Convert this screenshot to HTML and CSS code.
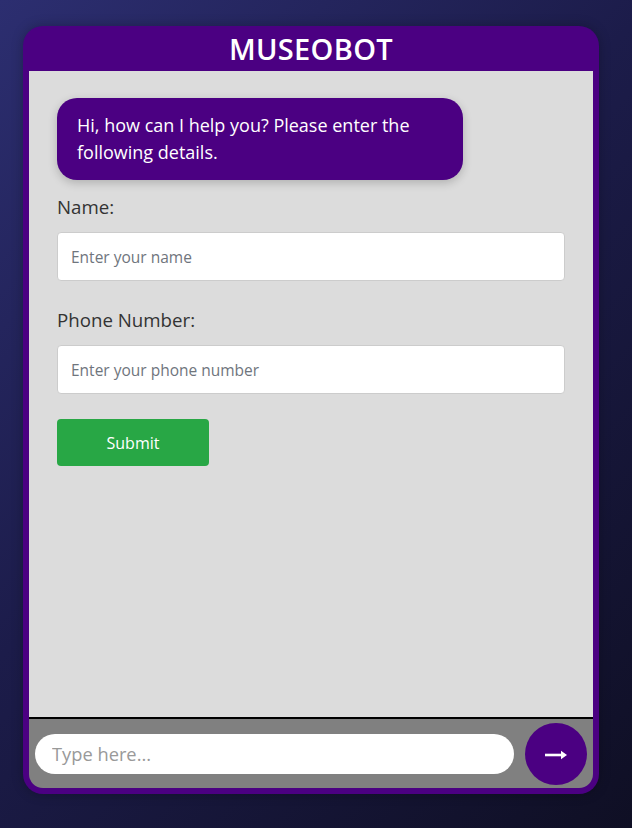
FILE: index.html
```html
<!DOCTYPE html>
<html lang="en">
<head>
<meta charset="utf-8">
<title>MuseoBot</title>
<link rel="stylesheet" href="styles.css">
</head>
<body>
<div class="bot">
  <header class="bot-header">MUSEOBOT</header>
  <main class="chat">
    <div class="bubble">Hi, how can I help you? Please enter the following details.</div>
    <form class="details">
      <label class="field-label" for="name">Name:</label>
      <input class="field" id="name" type="text" placeholder="Enter your name">
      <label class="field-label" for="phone">Phone Number:</label>
      <input class="field" id="phone" type="text" placeholder="Enter your phone number">
      <button class="submit" type="button">Submit</button>
    </form>
  </main>
  <footer class="composer">
    <input class="type-box" type="text" placeholder="Type here...">
    <button class="send" type="button" aria-label="Send">
      <svg class="send-icon" width="24" height="12" viewBox="0 0 24 12" aria-hidden="true">
        <path d="M1 6 H19" stroke="#fff" stroke-width="2.6" fill="none"/>
        <path d="M17 1.8 L23 6 L17 10.2 Z" fill="#fff"/>
      </svg>
    </button>
  </footer>
</div>
</body>
</html>
```

FILE: styles.css
```css
html, body {
  margin: 0;
  padding: 0;
}
body {
  width: 632px;
  height: 828px;
  background: linear-gradient(135deg, #2c2e70 0%, #1c1c4a 45%, #0f0f24 100%);
  font-family: "Open Sans", "Noto Sans", sans-serif;
  overflow: hidden;
}
.bot {
  box-sizing: border-box;
  margin: 26px 0 0 23px;
  width: 576px;
  height: 768px;
  background: #4b0082;
  border-radius: 20px;
  padding: 0 6px 6px;
  display: flex;
  flex-direction: column;
  box-shadow: 0 0 12px rgba(0,0,0,0.25);
}
.bot-header {
  height: 45px;
  display: flex;
  align-items: center;
  justify-content: center;
  color: #fff;
  font-weight: 600;
  font-size: 29px;
  letter-spacing: 0.3px;
}
.chat {
  flex: 1;
  background: #dcdcdc;
  padding: 27px 28px 0;
  border-bottom: 2px solid #000;
}
.bubble {
  box-sizing: border-box;
  width: 406px;
  background: #4b0082;
  color: #fff;
  font-size: 18px;
  line-height: 27px;
  padding: 14px 20px 14px 20px;
  border-radius: 20px;
  box-shadow: 0 3px 10px rgba(0,0,0,0.2);
}
.details {
  display: flex;
  flex-direction: column;
  align-items: flex-start;
  margin-top: 14px;
}
.field-label {
  font-size: 18.7px;
  color: #333;
  line-height: 26px;
  margin-bottom: 12px;
}
.field {
  box-sizing: border-box;
  width: 508px;
  height: 49px;
  border: 1px solid #ccc;
  border-radius: 4px;
  padding: 0 13px;
  font-family: inherit;
  font-size: 15.5px;
  background: #fff;
  margin-bottom: 26px;
}
.field::placeholder {
  color: #6f757d;
}
.submit {
  width: 152px;
  height: 47px;
  background: #28a745;
  color: #fff;
  border: none;
  border-radius: 4px;
  font-family: inherit;
  font-size: 16px;
  margin-top: -1px;
}
.composer {
  height: 69px;
  background: #808080;
  border-radius: 0 0 14px 14px;
  display: flex;
  align-items: center;
  padding: 0 6px;
  gap: 11px;
}
.type-box {
  box-sizing: border-box;
  flex: 1;
  height: 40px;
  border: none;
  border-radius: 20px;
  padding: 0 17px;
  font-family: inherit;
  font-size: 18.3px;
  background: #fff;
}
.type-box::placeholder {
  color: #999;
}
.send {
  width: 62px;
  height: 62px;
  border-radius: 50%;
  border: none;
  background: #4b0082;
  padding: 0;
  display: flex;
  align-items: center;
  justify-content: center;
}
.send-icon {
  display: block;
  margin-top: 2px;
}
```
